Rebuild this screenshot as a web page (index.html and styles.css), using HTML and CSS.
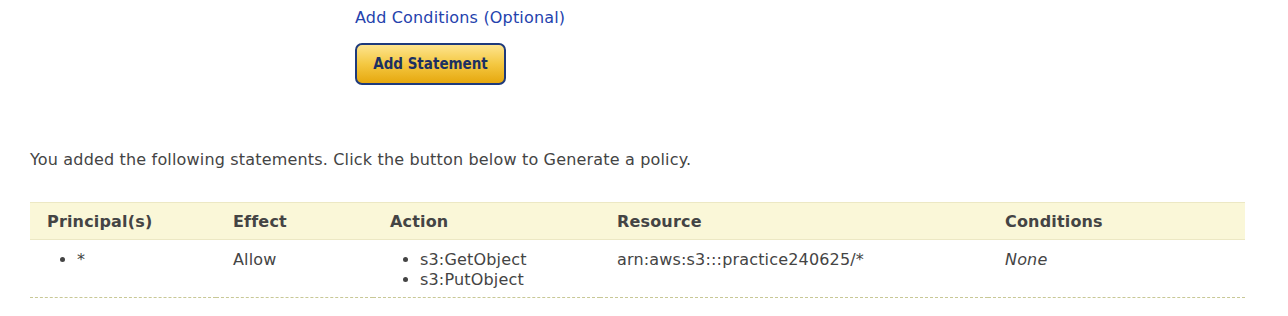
FILE: index.html
```
<!DOCTYPE html>
<html>
<head>
<meta charset="utf-8">
<link rel="stylesheet" href="styles.css">
</head>
<body>
<div class="form">
  <a class="link" href="#">Add Conditions (Optional)</a>
  <button class="btn">Add Statement</button>
</div>
<p class="intro">You added the following statements. Click the button below to Generate a policy.</p>
<table class="stmts">
  <colgroup>
    <col class="c1"><col class="c2"><col class="c3"><col class="c4"><col class="c5">
  </colgroup>
  <thead>
    <tr><th>Principal(s)</th><th>Effect</th><th>Action</th><th>Resource</th><th>Conditions</th></tr>
  </thead>
  <tbody>
    <tr>
      <td><ul class="list"><li>*</li></ul></td>
      <td>Allow</td>
      <td><ul class="list"><li>s3:GetObject</li><li>s3:PutObject</li></ul></td>
      <td>arn:aws:s3:::practice240625/*</td>
      <td><em>None</em></td>
    </tr>
  </tbody>
</table>
</body>
</html>
```
FILE: styles.css
```
html, body {
  margin: 0;
  padding: 0;
  background: #fff;
}
body {
  font-family: "DejaVu Sans", Verdana, sans-serif;
  font-size: 16px;
  letter-spacing: 0.17px;
  color: #444;
}
.form {
  padding-left: 355px;
  padding-top: 7px;
  display: flex;
  flex-direction: column;
  align-items: flex-start;
}
.link {
  color: #2442ad;
  text-decoration: none;
  line-height: 22px;
}
.btn {
  margin-top: 14px;
  width: 151px;
  height: 42px;
  border: 2px solid #1e3a7c;
  border-radius: 7px;
  background: linear-gradient(to bottom, #fde48e 0%, #f4c842 50%, #e6a80e 100%);
  font-family: "DejaVu Sans Condensed", "DejaVu Sans", sans-serif;
  font-stretch: condensed;
  font-weight: bold;
  font-size: 15px;
  letter-spacing: 0;
  color: #1c3062;
  padding: 0;
  cursor: pointer;
}
.intro {
  margin: 64px 0 0 30px;
  line-height: 22px;
}
.stmts {
  margin: 31px 0 0 30px;
  width: 1215px;
  border-collapse: collapse;
  table-layout: fixed;
}
.c1 { width: 186px; }
.c2 { width: 157px; }
.c3 { width: 227px; }
.c4 { width: 388px; }
.c5 { width: 257px; }
.stmts th {
  background: #faf7d8;
  border-top: 1px solid #ece8c4;
  border-bottom: 1px solid #ece8c4;
  text-align: left;
  font-weight: bold;
  height: 36px;
  padding: 0 17px;
  color: #444;
}
.stmts td {
  vertical-align: top;
  padding: 10px 17px 7px;
  line-height: 20px;
  border-bottom: 1px dashed #c8c896;
}
.list {
  margin: 0;
  padding-left: 30px;
}
.list li {
  line-height: 20px;
}
```
